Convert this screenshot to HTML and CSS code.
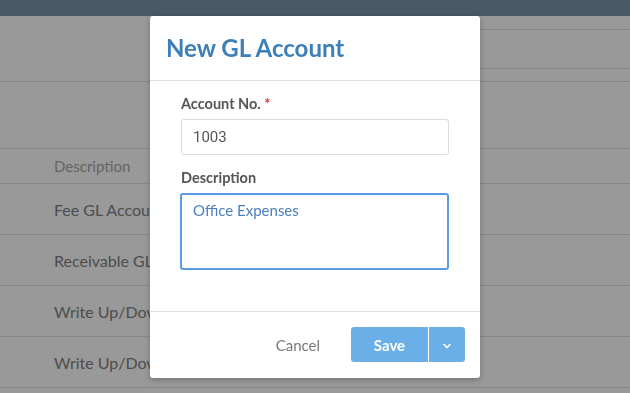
FILE: index.html
```html
<!DOCTYPE html>
<html>
  <head>
    <title>GL Accounts</title>
    <link rel="stylesheet" href="styles.css">
  </head>
  <body>
    <div class="top-bar"></div>

    <div class="page">
      <div class="toolbar">
        <div class="filter-strip"></div>
      </div>
      <div class="spacer"></div>

      <div class="table">
        <div class="table-head">
          <div class="cell">Description</div>
        </div>
        <div class="table-row"><div class="cell">Fee GL Account</div></div>
        <div class="table-row"><div class="cell">Receivable GL Account</div></div>
        <div class="table-row"><div class="cell">Write Up/Down GL Account</div></div>
        <div class="table-row"><div class="cell">Write Up/Down Offset Account</div></div>
      </div>
    </div>

    <div class="overlay">
      <div class="modal">
        <div class="modal-header">
          <h2 class="modal-title">New GL Account</h2>
        </div>
        <div class="modal-body">
          <div class="form-group">
            <label class="form-label">Account No. <span class="required">*</span></label>
            <input class="form-input" type="text" value="1003" />
          </div>
          <div class="form-group">
            <label class="form-label">Description</label>
            <textarea class="form-textarea">Office Expenses</textarea>
          </div>
        </div>
        <div class="modal-footer">
          <button class="cancel-button">Cancel</button>
          <div class="split-button">
            <button class="save-button">Save</button>
            <button class="menu-button">
              <svg width="10" height="6" viewBox="0 0 10 6">
                <path d="M1.5 1 L5 4.5 L8.5 1" fill="none" stroke="#fff" stroke-width="1.6" />
              </svg>
            </button>
          </div>
        </div>
      </div>
    </div>
  </body>
</html>
```

FILE: styles.css
```css
* {
  margin: 0;
  padding: 0;
  box-sizing: border-box;
  font-family: "Lato", "Open Sans", sans-serif;
}

body {
  width: 630px;
  height: 393px;
  overflow: hidden;
  background: #ffffff;
}

.top-bar {
  height: 16px;
  background: #7a95ae;
}

.toolbar {
  height: 66px;
  padding-top: 13px;
  border-bottom: 1px solid #e0e0e0;
}

.filter-strip {
  margin-left: 330px;
  height: 40px;
  border-top: 1px solid #e0e0e0;
  border-bottom: 1px solid #e0e0e0;
}

.spacer {
  height: 66px;
}

.table-head {
  height: 36px;
  display: flex;
  align-items: center;
  border-top: 1px solid #e0e0e0;
  border-bottom: 1px solid #e0e0e0;
  color: #a8a8a8;
  font-size: 15px;
}

.table-row {
  height: 51px;
  display: flex;
  align-items: center;
  border-bottom: 1px solid #e0e0e0;
  color: #818181;
  font-size: 16px;
}

.cell {
  padding-left: 54px;
  white-space: nowrap;
}

.overlay {
  position: fixed;
  top: 16px;
  left: 0;
  right: 0;
  bottom: 0;
  display: flex;
  justify-content: center;
  align-items: flex-start;
  background: rgba(0, 0, 0, 0.4);
}

.overlay::before {
  content: "";
  position: fixed;
  top: 0;
  left: 0;
  right: 0;
  height: 16px;
  background: rgba(0, 0, 0, 0.4);
}

.modal {
  width: 330px;
  background: #ffffff;
  border-radius: 3px;
  box-shadow: 0 2px 6px rgba(0, 0, 0, 0.25);
}

.modal-header {
  height: 65px;
  padding: 17px 16px 0;
  border-bottom: 1px solid #dddddd;
}

.modal-title {
  font-size: 24px;
  font-weight: 700;
  color: #3d7fb7;
  line-height: 30px;
}

.modal-body {
  height: 231px;
  padding: 14px 31px 0;
  border-bottom: 1px solid #dddddd;
}

.form-group {
  margin-bottom: 14px;
}

.form-label {
  display: block;
  font-size: 14.5px;
  font-weight: 700;
  color: #555555;
  margin-bottom: 7px;
  line-height: 17px;
}

.required {
  color: #e0303a;
}

.form-input {
  width: 268px;
  height: 36px;
  padding: 0 11px;
  border: 1px solid #dcdcdc;
  border-radius: 3px;
  font-family: "Roboto", sans-serif;
  font-size: 15px;
  color: #555555;
  outline: none;
}

.form-textarea {
  display: block;
  width: 269px;
  height: 77px;
  margin-left: -1px;
  padding: 6px 11px;
  border: 2px solid #5a9be6;
  border-radius: 3px;
  font-size: 15px;
  color: #4a7fc1;
  resize: none;
  outline: none;
}

.modal-footer {
  height: 66px;
  display: flex;
  align-items: center;
  justify-content: flex-end;
  padding: 0 15px 1px;
}

.cancel-button {
  background: transparent;
  border: none;
  font-size: 15px;
  color: #777777;
  margin-right: 31px;
  cursor: pointer;
}

.split-button {
  display: flex;
  height: 35px;
}

.save-button {
  width: 77px;
  background: #6aafe8;
  border: none;
  border-radius: 3px 0 0 3px;
  color: #ffffff;
  font-size: 15px;
  font-weight: 700;
  cursor: pointer;
}

.menu-button {
  width: 36px;
  margin-left: 1px;
  background: #6aafe8;
  border: none;
  border-radius: 0 3px 3px 0;
  display: flex;
  align-items: center;
  justify-content: center;
  padding-top: 3px;
  cursor: pointer;
}
```
